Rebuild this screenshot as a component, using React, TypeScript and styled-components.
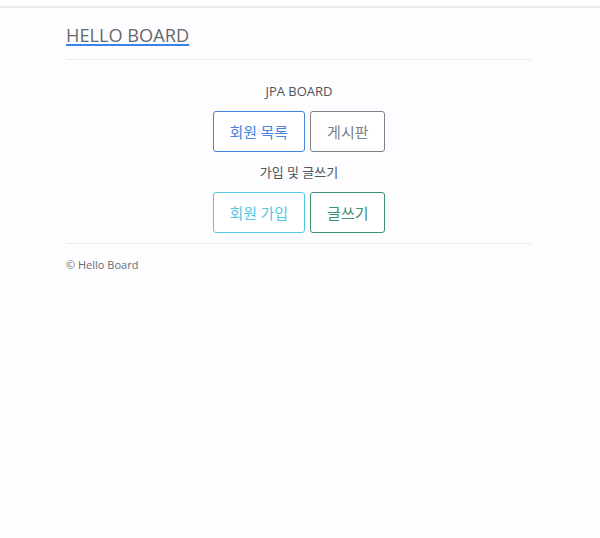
import React from 'react';
import styled, { createGlobalStyle } from 'styled-components';

const GlobalStyle = createGlobalStyle`
  body {
    margin: 0;
    background: #fdfcfe;
    font-family: "Open Sans", "Noto Sans CJK KR", sans-serif;
    color: #555a60;
  }
`;

type Variant = 'primary' | 'secondary' | 'info' | 'success';

const palette: Record<Variant, string> = {
    primary: '#4584e0',
    secondary: '#7d8187',
    info: '#58c8e2',
    success: '#3f8d74',
};

const App: React.FC = () => {
    return (
        <Page>
            <GlobalStyle />
            <TopLine />
            <Container>
                <Header>
                    <Title href="#">HELLO BOARD</Title>
                </Header>
                <Divider />
                <Main>
                    <SectionTitle>JPA BOARD</SectionTitle>
                    <ButtonRow>
                        <OutlineButton $variant="primary">회원 목록</OutlineButton>
                        <OutlineButton $variant="secondary">게시판</OutlineButton>
                    </ButtonRow>
                    <SectionTitle>가입 및 글쓰기</SectionTitle>
                    <ButtonRow>
                        <OutlineButton $variant="info">회원 가입</OutlineButton>
                        <OutlineButton $variant="success">글쓰기</OutlineButton>
                    </ButtonRow>
                </Main>
                <Divider />
                <Footer>© Hello Board</Footer>
            </Container>
        </Page>
    );
};

export default App;

const Page = styled.div`
  min-height: 538px;
  padding-top: 6px;
  box-sizing: border-box;
`;

const TopLine = styled.div`
  height: 2px;
  background: #ebebeb;
`;

const Container = styled.div`
  width: 466px;
  margin-left: 66px;
`;

const Header = styled.div`
  padding: 15px 0 12px;
`;

const Title = styled.a`
  font-family: "Open Sans", sans-serif;
  font-size: 18.2px;
  color: #666a6f;
  text-decoration: underline;
  text-decoration-color: #3b82e8;
  text-decoration-thickness: 2px;
  text-underline-offset: 2px;
  line-height: 24px;
`;

const Divider = styled.div`
  height: 1px;
  background: #ebebeb;
`;

const Main = styled.div`
  display: flex;
  flex-direction: column;
  align-items: center;
  padding: 21px 0 0;
`;

const SectionTitle = styled.div`
  font-size: 13px;
  line-height: 20px;
  color: #4f5459;
  margin-bottom: 10px;
`;

const ButtonRow = styled.div`
  display: flex;
  gap: 5px;
  margin-bottom: 10px;
`;

const OutlineButton = styled.button<{ $variant: Variant }>`
  font-family: "Noto Sans CJK KR", sans-serif;
  font-size: 15px;
  height: 41px;
  min-width: 74px;
  padding: 0 16px;
  background: #fff;
  border: 1px solid ${(p) => palette[p.$variant]};
  color: ${(p) => palette[p.$variant]};
  border-radius: 3px;
  cursor: pointer;
`;

const Footer = styled.footer`
  font-size: 11px;
  line-height: 15px;
  color: #6a6e73;
  padding-top: 13px;
`;
